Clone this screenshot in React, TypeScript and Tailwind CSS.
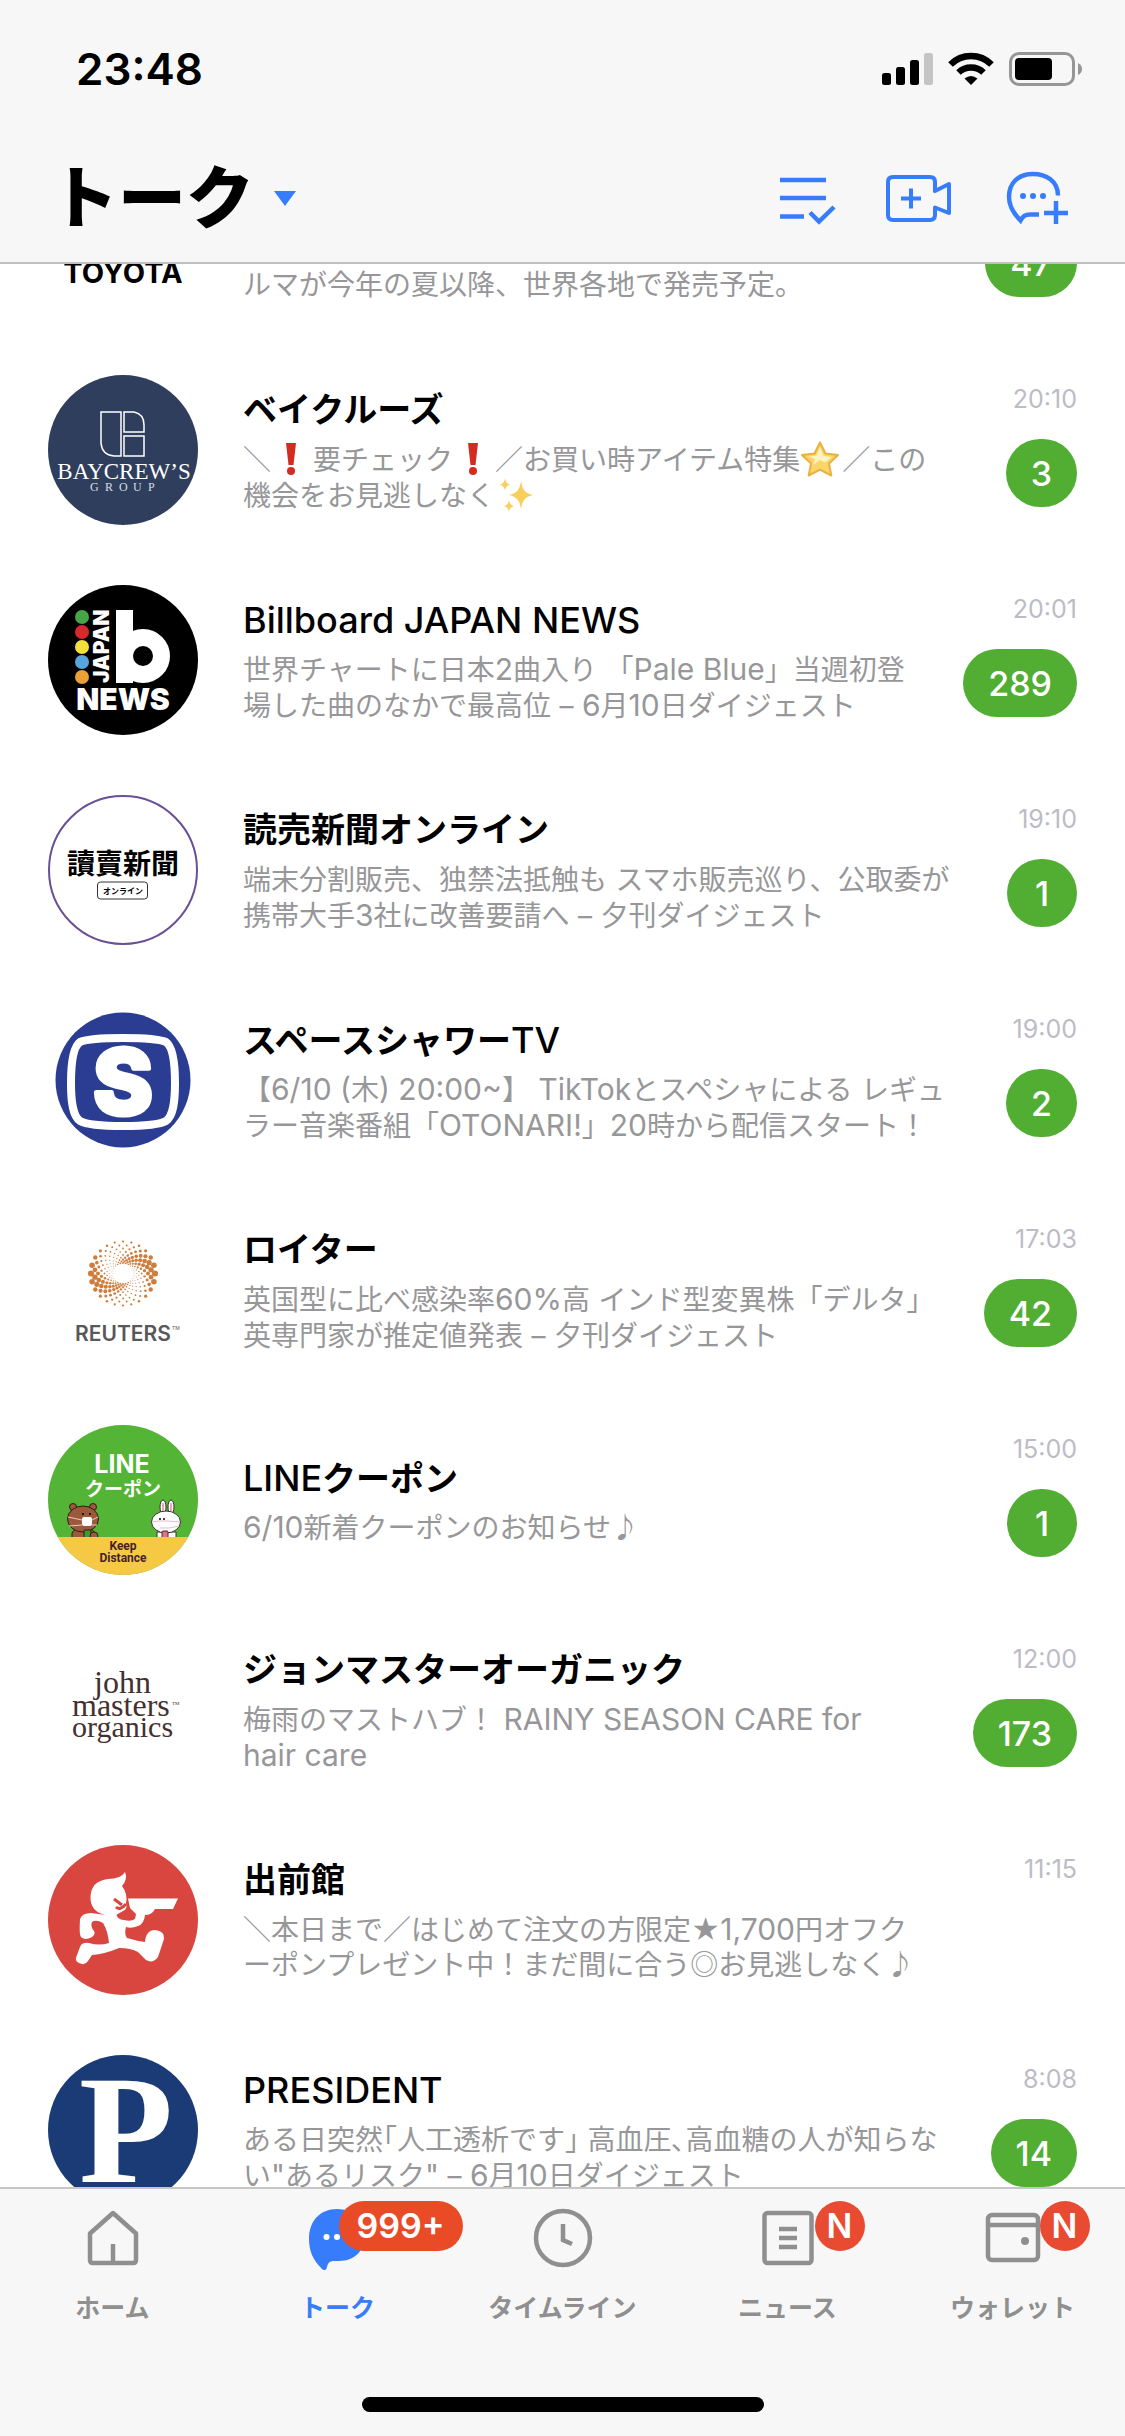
import type { ReactNode } from 'react';

type Chat = {
  id: string;
  name?: string;
  lines: ReactNode[];
  time?: string;
  unread?: number;
  avatar: ReactNode;
};

const LATIN = 'Inter, "Liberation Sans", sans-serif';
const KANA = '"Noto Sans CJK JP", sans-serif';
const SERIF = '"Liberation Serif", serif';

/* Emoji */

function Bang() {
  return (
    <svg role="img" aria-label="!" viewBox="0 0 42 36" className="inline-block h-9 w-[42px] align-[-7px]">
      <path d="M15 2h10l-2.500 22h-5z" fill="#d32b20" />
      <circle cx="20" cy="30" r="4" fill="#d32b20" />
    </svg>
  );
}

function Star() {
  return (
    <svg role="img" aria-label="star" viewBox="0 0 42 36" className="inline-block h-9 w-[42px] align-[-7px]">
      <path
        d="M20 1.500 25.500 12.500 38 14 29 22.500 31.300 34.500 20 28.600 8.700 34.500 11 22.500 2 14 14.500 12.500Z"
        fill="#f9d56b"
        stroke="#eab13f"
        strokeWidth="2"
        strokeLinejoin="round"
      />
      <path d="M20 6 23.500 15 32 16 25 21.500 20 19 13 24 15 18 9 15.500 16.500 14.500Z" fill="#fdf3c0" />
    </svg>
  );
}

function Sparkles() {
  return (
    <svg role="img" aria-label="sparkles" viewBox="0 0 42 36" className="inline-block h-9 w-[42px] align-[-7px]">
      <g fill="#f8cf5c">
        <path d="M26 4c1.500 9 4 12 12 14-8 2-10.500 5-12 14-1.500-9-4-12-12-14 8-2 10.500-5 12-14Z" />
        <path d="M10 1c.7 4 1.800 5.500 5 6.500-3.200 1-4.300 2.500-5 6.500-.7-4-1.800-5.500-5-6.500 3.200-1 4.300-2.500 5-6.500Z" />
        <path d="M14 23c.7 3.800 1.800 5 5 6-3.200 1-4.300 2.200-5 6-.7-3.800-1.800-5-5-6 3.200-1 4.300-2.200 5-6Z" />
      </g>
    </svg>
  );
}

/* Avatars, all drawn on a 150 x 150 board */

function Board({ children }: { children: ReactNode }) {
  return (
    <svg viewBox="0 0 150 150" className="size-[150px] shrink-0" aria-hidden="true">
      {children}
    </svg>
  );
}

function ToyotaAvatar() {
  return (
    <Board>
      <text x="75" y="118" textAnchor="middle" fontFamily={LATIN} fontSize="29" fontWeight="700">
        TOYOTA
      </text>
    </Board>
  );
}

function BaycrewsAvatar() {
  return (
    <Board>
      <circle cx="75" cy="75" r="75" fill="#2f3e5c" />
      <g fill="none" stroke="#fff" strokeWidth="1.500">
        <path d="M73 37H53V68Q54 80 66 81H73Z" />
        <path d="M76 37H86Q96 39 96 50V57H76Z" />
        <path d="M76 61H96V81H76Z" />
      </g>
      <text x="76" y="104" textAnchor="middle" fontFamily={SERIF} fontSize="23" fill="#fff">
        BAYCREW’S
      </text>
      <text x="42 57 71 85 100" y="116" fontFamily={SERIF} fontSize="12" fill="#d9dde6">
        GROUP
      </text>
    </Board>
  );
}

function BillboardAvatar() {
  const dots = ['#47a447', '#d9272e', '#f3e13b', '#56a5dc', '#e9a135'];
  return (
    <Board>
      <circle cx="75" cy="75" r="75" fill="#000" />
      {dots.map((fill, i) => (
        <circle key={fill} cx="34" cy={32 + i * 15} r="7" fill={fill} />
      ))}
      <text transform="translate(61 98) rotate(-90)" fontFamily={LATIN} fontSize="21" fontWeight="900" fill="#fff">
        JAPAN
      </text>
      <rect x="68" y="25" width="17" height="73" fill="#fff" />
      <circle cx="95" cy="71" r="18.500" fill="none" stroke="#fff" strokeWidth="17" />
      <text x="75" y="125" textAnchor="middle" fontFamily={LATIN} fontSize="30" fontWeight="900" fill="#fff">
        NEWS
      </text>
    </Board>
  );
}

function YomiuriAvatar() {
  return (
    <Board>
      <circle cx="75" cy="75" r="74" fill="#fff" stroke="#6b4f96" strokeWidth="2" />
      <text x="75" y="79" textAnchor="middle" fontFamily={KANA} fontSize="28" fontWeight="700">
        讀賣新聞
      </text>
      <rect x="49.500" y="87" width="50" height="17" rx="3" fill="#fff" stroke="#333" />
      <text x="75" y="99" textAnchor="middle" fontFamily={KANA} fontSize="8" fontWeight="700">
        オンライン
      </text>
    </Board>
  );
}

function SpaceShowerAvatar() {
  return (
    <Board>
      <circle cx="75" cy="75" r="67.500" fill="#2b3d92" />
      <path
        d="M75 33C97 33 111 34 118 37C125 42 127 58 127 78C127 98 125 111 118 116C111 120 97 121 75 121C53 121 39 120 32 116C25 111 23 98 23 78C23 58 25 42 32 37C39 34 53 33 75 33Z"
        fill="none"
        stroke="#fff"
        strokeWidth="8"
      />
      <text
        x="75"
        y="109"
        textAnchor="middle"
        fontFamily={LATIN}
        fontSize="90"
        fontWeight="800"
        fill="#fff"
        stroke="#fff"
        strokeWidth="5"
        strokeLinejoin="round"
      >
        S
      </text>
    </Board>
  );
}

function ReutersAvatar() {
  const rings = [32, 28.3, 25, 21.7, 18.6, 16, 13.8, 12, 10.5];
  return (
    <Board>
      {rings.map((radius, ring) =>
        Array.from({ length: 24 }, (_, i) => {
          const angle = ((i + (ring % 2) / 2) * Math.PI) / 12;
          const peak = (-ring * Math.PI) / 16;
          const swell = (1 + Math.cos(2 * (angle - peak))) / 2;
          return (
            <circle
              key={`${ring}-${i}`}
              cx={75 + radius * Math.cos(angle)}
              cy={58.5 + radius * Math.sin(angle)}
              r={radius * (0.035 + swell * swell * 0.06)}
              fill="#cf7d3c"
            />
          );
        }),
      )}
      <text x="75" y="126" textAnchor="middle" fontFamily={LATIN} fontSize="21" fontWeight="600" fill="#58585a">
        REUTERS
      </text>
      <text x="124" y="115" fontFamily={LATIN} fontSize="5" fill="#58585a">
        TM
      </text>
    </Board>
  );
}

function CouponAvatar() {
  return (
    <Board>
      <clipPath id="coupon-clip">
        <circle cx="75" cy="75" r="75" />
      </clipPath>
      <g clipPath="url(#coupon-clip)">
        <rect width="150" height="150" fill="#54b435" />
        {/* bear */}
        <g fill="#9c5a3c" stroke="#2f1d17" strokeWidth="1">
          <path d="M24 116V108Q26 103 35 103Q45 103 47 108V116Z" />
          <circle cx="25" cy="82" r="3.500" />
          <circle cx="45" cy="82" r="3.500" />
          <ellipse cx="35" cy="94" rx="15.500" ry="13" />
        </g>
        <path d="M20 92 34 95M44 95 50 92M21 101 34 100M44 100 49 100" stroke="#e9c9b8" strokeWidth="1" />
        <rect x="34" y="92" width="10" height="9" rx="2" fill="#fff" />
        <circle cx="35" cy="89" r="1" />
        <circle cx="42" cy="89" r="1" />
        <rect x="36" y="105" width="7" height="10" rx="1" fill="#3f9b2b" stroke="#2f1d17" />
        <circle cx="46" cy="111" r="4" fill="#9c5a3c" stroke="#2f1d17" />
        {/* rabbit */}
        <g fill="#fff" stroke="#3a3030" strokeWidth="1">
          <ellipse cx="115" cy="82" rx="3" ry="7" />
          <ellipse cx="123" cy="82" rx="3" ry="7" />
          <path d="M109 117V107H128V117Z" />
          <ellipse cx="118" cy="97" rx="14.500" ry="11" />
        </g>
        <path d="M115 78V86M123 78V86" stroke="#f2a3b4" strokeWidth="2" />
        <circle cx="112" cy="94" r="1" />
        <circle cx="116" cy="94" r="1" />
        <path d="M104 97 111 96H120L132 97M112 103H121L131 101" fill="none" stroke="#f0b7cf" strokeWidth="1" />
        <rect x="114" y="106" width="6" height="10" rx="1" fill="#e5737d" stroke="#3a3030" />
        <rect y="112" width="150" height="38" fill="#f5c944" />
        <text x="74" y="48" textAnchor="middle" fontFamily={LATIN} fontSize="25" fontWeight="700" fill="#fff">
          LINE
        </text>
        <text x="75" y="71" textAnchor="middle" fontFamily={KANA} fontSize="19" fontWeight="700" fill="#fff">
          クーポン
        </text>
        <g textAnchor="middle" fontFamily="Roboto, sans-serif" fontSize="12" fontWeight="700" fill="#47222a">
          <text x="75" y="125">
            Keep
          </text>
          <text x="75" y="137">
            Distance
          </text>
        </g>
      </g>
    </Board>
  );
}

function JohnMastersAvatar() {
  return (
    <Board>
      <g fontFamily={SERIF} fill="#43302f">
        <text x="46" y="58" fontSize="32">
          john
        </text>
        <text x="24" y="81" fontSize="32">
          masters
        </text>
        <text x="24" y="102" fontSize="30">
          organics
        </text>
        <text x="124" y="70" fontSize="5">
          TM
        </text>
      </g>
    </Board>
  );
}

function DemaecanAvatar() {
  return (
    <Board>
      <circle cx="75" cy="75" r="75" fill="#d8463f" />
      <g fill="#fff">
        <path d="M60 34Q73 34 77 27Q80 34 74 41Q80 49 78 58Q80 64 75 66L68 70H57Q42 66 42.500 52Q43 36 60 34Z" />
        <path d="M80 53.500H130L125 64H107Q104 70 97 70Q96 79 90 81Q83 84 78 82Q76 89 79 93Q89 96 97 97Q98 85 107 85Q117 86 116 94L110 112Q105 119 98 115L90 107Q83 103 71 103Q57 109 44 110L40 116Q37 121 31 118Q26 116 29 110L32 102Q34 97 41 98Q51 101 61 98Q60 86 55 78Q48 74 44 77Q42 81 46 86Q48 89 44 92Q37 96 33 92Q31 90 32 74Q34 68 43 68L58 70L68 68Q69 75 76 75Q83 77 87 74L88 69L82 63Z" />
      </g>
      <path d="M66 54 74 60M68 62Q72 66 78 59" fill="none" stroke="#d8463f" strokeWidth="3" />
    </Board>
  );
}

function PresidentAvatar() {
  return (
    <Board>
      <circle cx="75" cy="75" r="75" fill="#1a3b75" />
      <text x="78" y="127" textAnchor="middle" fontFamily={SERIF} fontSize="154" fontWeight="700" fill="#fff">
        P
      </text>
    </Board>
  );
}

const chats: Chat[] = [
  {
    id: 'toyota',
    lines: ['', 'ルマが今年の夏以降、世界各地で発売予定。'],
    unread: 47,
    avatar: <ToyotaAvatar />,
  },
  {
    id: 'baycrews',
    name: 'ベイクルーズ',
    lines: [
      <>＼<Bang />要チェック<Bang />／お買い時アイテム特集<Star />／この</>,
      <>機会をお見逃しなく<Sparkles /></>,
    ],
    time: '20:10',
    unread: 3,
    avatar: <BaycrewsAvatar />,
  },
  {
    id: 'billboard',
    name: 'Billboard JAPAN NEWS',
    lines: ['世界チャートに日本2曲入り 「Pale Blue」当週初登', '場した曲のなかで最高位 – 6月10日ダイジェスト'],
    time: '20:01',
    unread: 289,
    avatar: <BillboardAvatar />,
  },
  {
    id: 'yomiuri',
    name: '読売新聞オンライン',
    lines: ['端末分割販売、独禁法抵触も スマホ販売巡り、公取委が', '携帯大手3社に改善要請へ – 夕刊ダイジェスト'],
    time: '19:10',
    unread: 1,
    avatar: <YomiuriAvatar />,
  },
  {
    id: 'spaceshower',
    name: 'スペースシャワーTV',
    lines: ['【6/10 (木) 20:00~】 TikTokとスペシャによる レギュ', 'ラー音楽番組「OTONARI!」20時から配信スタート！'],
    time: '19:00',
    unread: 2,
    avatar: <SpaceShowerAvatar />,
  },
  {
    id: 'reuters',
    name: 'ロイター',
    lines: ['英国型に比べ感染率60%高 インド型変異株「デルタ」', '英専門家が推定値発表 – 夕刊ダイジェスト'],
    time: '17:03',
    unread: 42,
    avatar: <ReutersAvatar />,
  },
  {
    id: 'coupon',
    name: 'LINEクーポン',
    lines: ['6/10新着クーポンのお知らせ♪'],
    time: '15:00',
    unread: 1,
    avatar: <CouponAvatar />,
  },
  {
    id: 'johnmasters',
    name: 'ジョンマスターオーガニック',
    lines: ['梅雨のマストハブ！ RAINY SEASON CARE for', 'hair care'],
    time: '12:00',
    unread: 173,
    avatar: <JohnMastersAvatar />,
  },
  {
    id: 'demaecan',
    name: '出前館',
    lines: ['＼本日まで／はじめて注文の方限定★1,700円オフク', 'ーポンプレゼント中！まだ間に合う◎お見逃しなく♪'],
    time: '11:15',
    avatar: <DemaecanAvatar />,
  },
  {
    id: 'president',
    name: 'PRESIDENT',
    lines: ['ある日突然｢人工透析です｣ 高血圧､高血糖の人が知らな', 'い"あるリスク" – 6月10日ダイジェスト'],
    time: '8:08',
    unread: 14,
    avatar: <PresidentAvatar />,
  },
];

// Latin runs are set a little larger than the kana and kanji around them
function mixed(text: string, latinClass: string) {
  return text.split(/([ -~]+)/).map((part, i) =>
    i % 2 === 1 ? (
      <span key={i} className={latinClass}>
        {part}
      </span>
    ) : (
      part
    ),
  );
}

function ChatRow({ chat }: { chat: Chat }) {
  return (
    <li className="flex items-center px-12 py-[30px]">
      {chat.avatar}
      <div className="ml-[45px] min-w-0 flex-1">
        <h2 className="h-11 text-[34px] leading-[46px] font-bold whitespace-nowrap text-black">
          {chat.name && mixed(chat.name, 'text-[36px] font-medium')}
        </h2>
        <div className="mt-[10px] text-[28px] leading-[36px] whitespace-nowrap text-[#979799]">
          {chat.lines.map((line, i) => (
            <p key={i} className="h-9">
              {typeof line === 'string' ? mixed(line, 'text-[30px]') : line}
            </p>
          ))}
        </div>
      </div>
      <div className="flex h-[132px] shrink-0 flex-col items-end gap-[25px]">
        <time className="h-[30px] text-[25px] leading-[30px] text-[#bcbcc6]">{chat.time}</time>
        {chat.unread && (
          <span className="flex h-[68px] min-w-[70px] items-center justify-center rounded-full bg-[#51ae32] px-[25px] text-[34px] font-medium text-white">
            {chat.unread}
          </span>
        )}
      </div>
    </li>
  );
}

function StatusBar() {
  return (
    <div className="flex h-[138px] items-center justify-between pr-[43px] pl-[76px]">
      <span className="text-[44px] leading-[52px] font-semibold">23:48</span>
      <svg viewBox="0 0 200 34" className="h-[34px] w-[200px]" role="img" aria-label="Signal, Wi-Fi, battery">
        <rect x="0" y="21" width="9" height="12" rx="2.500" />
        <rect x="14" y="15" width="9" height="18" rx="2.500" />
        <rect x="28" y="8" width="9" height="25" rx="2.500" />
        <rect x="42" y="1" width="9" height="32" rx="2.500" fill="#c4c4c4" />
        <g fill="none" stroke="#000" strokeWidth="6.500">
          <path d="M68.500 12.500A29 29 0 0 1 109.500 12.500" />
          <path d="M76.500 20.500A18 18 0 0 1 101.500 20.500" />
        </g>
        <path d="M82.500 26.500Q89 21.500 95.500 26.500L89 33Z" />
        <rect x="128.500" y="1.500" width="63" height="31" rx="8.500" fill="none" stroke="#969696" strokeWidth="3" />
        <rect x="133" y="6" width="37" height="22" rx="4" />
        <path d="M196 11Q200 13 200 17Q200 21 196 23Z" fill="#969696" />
      </svg>
    </div>
  );
}

function TitleBar() {
  return (
    <div className="flex h-[124px] items-start justify-between pr-[55px] pl-[50px]">
      <button type="button" className="flex h-[120px] items-center gap-5">
        <h1 className="text-[68px] leading-[80px] font-black">トーク</h1>
        <svg viewBox="0 0 22 15" className="h-[15px] w-[22px]" aria-hidden="true">
          <path d="M0 0H22L11 15Z" fill="#377dfb" />
        </svg>
      </button>
      <div className="flex h-[120px] items-center gap-[52px] text-[#377dfb]">
        <button type="button" aria-label="Edit list">
          <svg viewBox="0 0 54 54" className="size-[54px] overflow-visible" fill="none" stroke="currentColor" strokeWidth="4.500">
            <path d="M0 9H46M0 27H46M0 45.500H24" />
            <path d="M30 41.500 39 50.500 54 36" />
          </svg>
        </button>
        <button type="button" aria-label="New meeting">
          <svg viewBox="0 0 68 54" className="h-[54px] w-[68px]" fill="none" stroke="currentColor" strokeWidth="4" strokeLinejoin="round">
            <path d="M49 20V11Q49 6 44 6H7Q2 6 2 11V44Q2 49 7 49H44Q49 49 49 44V36.500L63 42V13Z" />
            <path d="M15 27.500H35M25 17.500V37.500" />
          </svg>
        </button>
        <button type="button" aria-label="New chat">
          <svg viewBox="0 0 64 54" className="h-[54px] w-16" fill="none" stroke="currentColor" strokeWidth="4.500">
            <path d="M52 24.500C52 10 40 3 27 3C12 3 3 12 3 26C3 36 8 43 14.500 49.500C17 45 19 43.500 24 43.500H33" />
            <path d="M38 42H62M50 30V53" />
            <g fill="currentColor" stroke="none">
              <circle cx="17" cy="25" r="3" />
              <circle cx="27" cy="25" r="3" />
              <circle cx="37" cy="25" r="3" />
            </g>
          </svg>
        </button>
      </div>
    </div>
  );
}

const iconClass = 'h-16 w-[60px]';

function HomeIcon() {
  return (
    <svg viewBox="0 0 60 64" className={iconClass} fill="none" stroke="currentColor" strokeWidth="4.500" strokeLinejoin="round">
      <path d="M30 7 53 27.500V54Q53 57 50 57H10Q7 57 7 54V27.500Z" />
      <path d="M30 38V56" />
    </svg>
  );
}

function TalkIcon() {
  return (
    <svg viewBox="0 0 60 64" className={iconClass}>
      <path d="M29 3C45 3 57 14 57 29C57 44 47 55 31 55H25Q20 55 19 61Q18 66 14 63C5 54 1 45 1 33C1 15 12 3 29 3Z" fill="#377dfb" />
      <circle cx="18.500" cy="31" r="3" fill="#fff" />
      <circle cx="29" cy="31" r="3" fill="#fff" />
    </svg>
  );
}

function TimelineIcon() {
  return (
    <svg viewBox="0 0 60 64" className={iconClass} fill="none" stroke="currentColor" strokeWidth="4.500">
      <ellipse cx="30" cy="32" rx="27" ry="27" />
      <path d="M30 18V34L39 38" />
    </svg>
  );
}

function NewsIcon() {
  return (
    <svg viewBox="0 0 60 64" className={iconClass} fill="none" stroke="currentColor" strokeWidth="4.500">
      <rect x="6.500" y="7" width="47" height="50" rx="3" />
      <path d="M21 23H39M21 32H39M21 41H39" />
    </svg>
  );
}

function WalletIcon() {
  return (
    <svg viewBox="0 0 60 64" className={iconClass} fill="none" stroke="currentColor" strokeWidth="4.500">
      <rect x="5" y="9" width="50" height="45" rx="4" />
      <path d="M5 19H55" />
      <circle cx="42" cy="35" r="4" fill="currentColor" stroke="none" />
    </svg>
  );
}

const tabs = [
  { label: 'ホーム', icon: <HomeIcon /> },
  { label: 'トーク', icon: <TalkIcon />, badge: '999+', active: true },
  { label: 'タイムライン', icon: <TimelineIcon /> },
  { label: 'ニュース', icon: <NewsIcon />, badge: 'N' },
  { label: 'ウォレット', icon: <WalletIcon />, badge: 'N' },
];

function TabBar() {
  return (
    <footer className="flex shrink-0 flex-col items-center border-t-2 border-[#c6c6c8] bg-[#f7f7f7] pb-6">
      <nav className="grid w-full grid-cols-5">
        {tabs.map((tab) => (
          <a
            key={tab.label}
            href="#"
            className={`flex flex-col items-center pt-[17px] text-[25px] leading-[36px] font-bold ${
              tab.active ? 'text-[#377dfb]' : 'text-[#8f8f8f]'
            }`}
          >
            <span className="relative">
              {tab.icon}
              {tab.badge && tab.badge.length > 1 && (
                <span className="absolute -top-[5px] left-[31px] flex h-[50px] items-center rounded-full bg-[#ea4b27] px-[18px] text-[34px] font-semibold text-white">
                  {tab.badge}
                </span>
              )}
              {tab.badge && tab.badge.length === 1 && (
                <span className="absolute -top-[5px] left-[57px] flex size-[50px] items-center justify-center rounded-full bg-[#e94b32] text-[34px] font-semibold text-white">
                  {tab.badge}
                </span>
              )}
            </span>
            <span className="mt-5">{tab.label}</span>
          </a>
        ))}
      </nav>
      <div className="mt-[71px] h-[15px] w-[402px] rounded-full bg-black" />
    </footer>
  );
}

export default function App() {
  return (
    <div className="flex h-dvh flex-col overflow-hidden bg-white font-[Inter,'Noto_Sans_CJK_JP',sans-serif] text-black" lang="ja">
      <header className="shrink-0 border-b-2 border-[#c0c0c2] bg-[#f7f7f7]">
        <StatusBar />
        <TitleBar />
      </header>
      <main className="min-h-0 flex-1 overflow-hidden">
        {/* list is scrolled part of the way into its first row */}
        <ul className="-mt-[129px]">
          {chats.map((chat) => (
            <ChatRow key={chat.id} chat={chat} />
          ))}
        </ul>
      </main>
      <TabBar />
    </div>
  );
}
